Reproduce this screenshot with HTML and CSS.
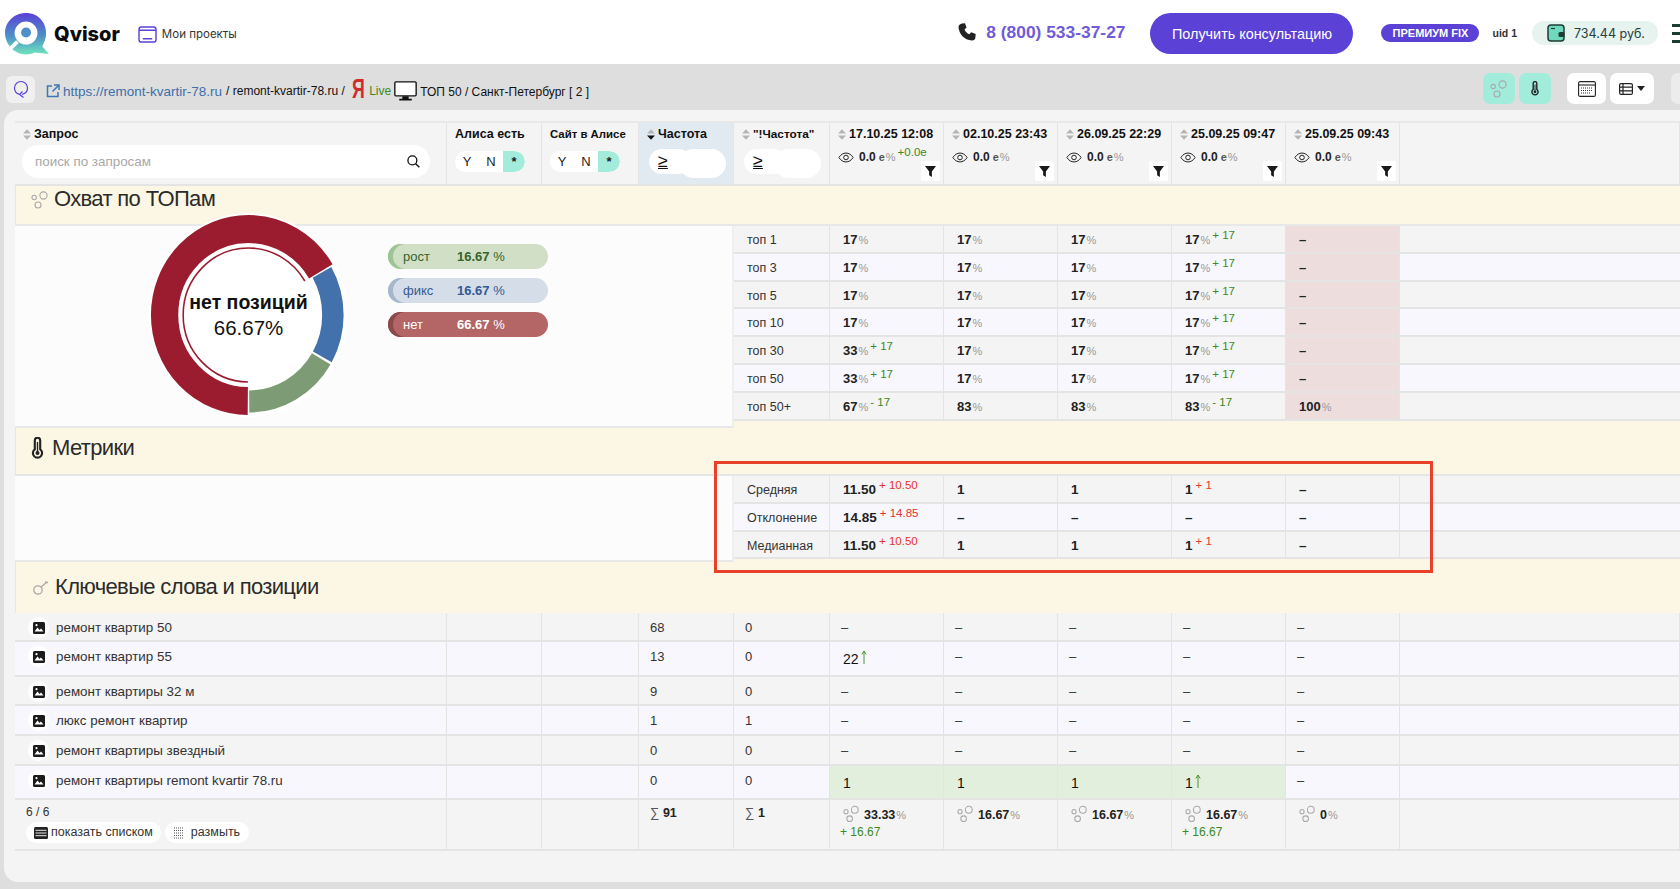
FILE: index.html
```html
<!DOCTYPE html>
<html lang="ru">
<head>
<meta charset="utf-8">
<title>Qvisor</title>
<link rel="stylesheet" href="styles.css">
</head>
<body>
<svg class="defs" width="0" height="0" aria-hidden="true">
  <symbol id="sort" viewBox="0 0 9 12"><path d="M4.500 0 9 5H0zM4.500 12 0 7h9z" fill="#b5b5b5"/></symbol>
  <symbol id="sort-on" viewBox="0 0 9 12"><path d="M4.500 0 9 5H0z" fill="#b5b5b5"/><path d="M4.500 12 0 7h9z" fill="#111"/></symbol>
  <symbol id="bubbles" viewBox="0 0 18 18"><g fill="none" stroke="#a9a9a9" stroke-width="1.100"><circle cx="3.200" cy="6.500" r="2.200"/><circle cx="12.500" cy="4.500" r="3.600"/><circle cx="7" cy="14" r="3"/></g></symbol>
  <symbol id="eye" viewBox="0 0 18 12"><path d="M1 6c2-3.300 5-5 8-5s6 1.700 8 5c-2 3.300-5 5-8 5S3 9.300 1 6z" fill="none" stroke="#222" stroke-width="1.100"/><circle cx="9" cy="6" r="2.600" fill="none" stroke="#222" stroke-width="1.100"/></symbol>
  <symbol id="funnel" viewBox="0 0 12 12"><path d="M0 0h12L7.500 6v6l-3-2V6z" fill="#1a1a1a"/></symbol>
  <symbol id="pic" viewBox="0 0 12 12"><path fill="#1b1b1b" d="M1.500 0h9A1.500 1.500 0 0 1 12 1.500v9a1.500 1.500 0 0 1-1.500 1.500h-9A1.500 1.500 0 0 1 0 10.500v-9A1.500 1.500 0 0 1 1.500 0z"/><path fill="#fff" d="M1.500 9.500 4.500 5.500l2 2.500 1.500-1.500 2.500 3z"/><circle cx="3.500" cy="3.200" r="1.100" fill="#fff"/></symbol>
  <symbol id="thermo" viewBox="0 0 12 22"><path d="M3.300 3.400a2.700 2.700 0 0 1 5.400 0v8.900a4.600 4.600 0 1 1-5.400 0z" fill="none" stroke="#222" stroke-width="2.100"/><circle cx="6" cy="16" r="2" fill="#222"/><path d="M6 5v10" stroke="#222" stroke-width="1.400"/></symbol>
  <symbol id="list" viewBox="0 0 14 12"><rect x=".6" y=".6" width="12.800" height="10.800" rx="1.500" fill="none" stroke="#222" stroke-width="1.200"/><path d="M.6 4.200h12.800M.6 7.800h12.800M4 .6v10.800" stroke="#222" stroke-width="1.200"/></symbol>
  <symbol id="list-solid" viewBox="0 0 14 12"><rect width="14" height="12" rx="1.500" fill="#222"/><path d="M1.500 3.300h11M1.500 6h11M1.500 8.700h11" stroke="#fff" stroke-width=".9"/></symbol>
  <symbol id="arrow" viewBox="0 0 6 14"><path d="M3 14V1.500M.8 4.500 3 1l2.200 3.500" fill="none" stroke="#3a8a23" stroke-width=".9"/></symbol>
</svg>

<header class="topbar">
  <a class="brand">
    <svg class="logo" viewBox="0 0 46 44">
      <defs><linearGradient id="lg" x1="0" y1="0" x2="0" y2="1"><stop offset="0" stop-color="#5b3fd8"/><stop offset=".55" stop-color="#4d90c6"/><stop offset="1" stop-color="#6fe3bd"/></linearGradient></defs>
      <path fill="url(#lg)" d="M22 0C34 0 43 9 43 21c0 6-2 10-4 14l7 8-15-1.500C28 43 25 43.500 22 43.500 10 43.500 0 33 0 21 0 9 10 0 22 0z"/>
      <circle cx="22" cy="21" r="12" fill="#fff"/>
      <circle cx="22" cy="20.500" r="5.200" fill="#4f8fc9"/>
      <path d="M13 30 5 38" stroke="#fff" stroke-width="4"/>
    </svg>
    <span class="brand-name">Qvisor</span>
  </a>
  <a class="projects">
    <svg class="projects-icon" viewBox="0 0 20 18"><rect x="1" y="1" width="18" height="16" rx="2.500" fill="none" stroke="#5b41d6" stroke-width="1.500"/><path d="M1 4.500h18M5 13.500h10" stroke="#5b41d6" stroke-width="1.500"/></svg>
    Мои проекты
  </a>
  <div class="top-right">
    <svg class="phone-icon" viewBox="0 0 18 18"><path fill="#222" d="M4 .5 7 .2l1.500 4.300-2 2c.8 2 2.500 3.800 4.700 4.800l2-2L17.700 11l-.3 3.500C17.200 16.300 16 17.500 14 17.500 6 17 1 11 .5 4 .5 2.300 2 .7 4 .5z"/></svg>
    <span class="phone">8 (800) 533-37-27</span>
    <button class="cta">Получить консультацию</button>
    <span class="plan">ПРЕМИУМ FIX</span>
    <span class="uid">uid 1</span>
    <span class="balance">
      <svg class="wallet" viewBox="0 0 18 18"><rect x="1" y="1" width="16" height="16" rx="3" fill="#6fd9bd" stroke="#1f3b35" stroke-width="1.500"/><rect x="11.500" y="8" width="6" height="5" rx="1.500" fill="#1f3b35"/><path d="M4 4.500h4" stroke="#1f3b35" stroke-width="1.200"/></svg>
      734.44 руб.
    </span>
    <span class="burger"><i></i><i></i><i></i></span>
  </div>
</header>

<nav class="toolbar">
  <span class="refresh">
    <svg viewBox="0 0 16 20" width="16" height="20"><path d="M9 14.500c3-.8 5.500-3 5.500-6.500A6.500 6.500 0 0 0 8 1.500 6.500 6.500 0 0 0 1.500 8c0 3 2 5.500 5 6.300M10.500 17.500 6.500 14.500l3-3" fill="none" stroke="#5b41d6" stroke-width="1.200"/></svg>
  </span>
  <svg class="ext" viewBox="0 0 14 14"><path d="M6 2H1.500v10.500H12V8M8 1h5v5M13 1 6.500 7.500" fill="none" stroke="#3d78b5" stroke-width="1.500"/></svg>
  <a class="url">https://remont-kvartir-78.ru</a>
  <span class="crumb">/ remont-kvartir-78.ru /</span>
  <span class="ya">Я</span>
  <span class="live">Live</span>
  <svg class="monitor" viewBox="0 0 22 19"><rect x=".8" y=".8" width="20.400" height="13.400" rx="1" fill="#fff" stroke="#111" stroke-width="1.300"/><path d="M8 14.500h6v2.500h3v1.500H5V17h3z" fill="#111"/></svg>
  <span class="crumb-region">ТОП 50 / Санкт-Петербург [ 2 ]</span>
  <div class="tools">
    <span class="tool mint"><svg width="18" height="18"><use href="#bubbles"/></svg></span>
    <span class="tool mint"><svg width="8" height="15"><use href="#thermo"/></svg></span>
    <span class="tool white gap">
      <svg viewBox="0 0 18 16" width="18" height="16"><rect x=".6" y=".6" width="16.800" height="14.800" rx="1.500" fill="none" stroke="#222" stroke-width="1.100"/><path d="M.6 4h16.800" stroke="#222" stroke-width="1.100"/><path d="M3 7h12M3 9.500h12M3 12h9" stroke="#333" stroke-width="1.100" stroke-dasharray="1 1"/></svg>
    </span>
    <span class="tool white wide"><svg width="14" height="12"><use href="#list"/></svg><i class="caret"></i></span>
    <span class="tool ghost"></span>
  </div>
</nav>

<main class="panel">
  <div class="sheet">
    <div class="row head">
      <div class="c search-col">
        <div class="h"><svg class="s"><use href="#sort"/></svg>Запрос</div>
        <div class="search"><span>поиск по запросам</span>
          <svg viewBox="0 0 14 14" width="13" height="13"><circle cx="5.800" cy="5.800" r="4.800" fill="none" stroke="#111" stroke-width="1.400"/><path d="M9.300 9.300 13.300 13.300" stroke="#111" stroke-width="1.500"/></svg>
        </div>
      </div>
      <div class="c"><div class="h h-large">Алиса есть</div><div class="yn"><b>Y</b><b>N</b><b class="on">*</b></div></div>
      <div class="c"><div class="h h-small">Сайт в Алисе</div><div class="yn"><b>Y</b><b>N</b><b class="on">*</b></div></div>
      <div class="c active"><div class="h"><svg class="s"><use href="#sort-on"/></svg>Частота</div><div class="gte"><span>≥</span><i></i></div></div>
      <div class="c"><div class="h h-tight"><svg class="s"><use href="#sort"/></svg>"!Частота"</div><div class="gte"><span>≥</span><i></i></div></div>
      <div class="c date"><div class="h"><svg class="s"><use href="#sort"/></svg>17.10.25 12:08</div><div class="vis"><svg class="e"><use href="#eye"/></svg><b>0.0</b><em>е</em><u>%</u><sup class="up">+0.0е</sup></div><span class="fn"><svg width="11" height="11"><use href="#funnel"/></svg></span></div>
      <div class="c date"><div class="h"><svg class="s"><use href="#sort"/></svg>02.10.25 23:43</div><div class="vis"><svg class="e"><use href="#eye"/></svg><b>0.0</b><em>е</em><u>%</u></div><span class="fn"><svg width="11" height="11"><use href="#funnel"/></svg></span></div>
      <div class="c date"><div class="h"><svg class="s"><use href="#sort"/></svg>26.09.25 22:29</div><div class="vis"><svg class="e"><use href="#eye"/></svg><b>0.0</b><em>е</em><u>%</u></div><span class="fn"><svg width="11" height="11"><use href="#funnel"/></svg></span></div>
      <div class="c date"><div class="h"><svg class="s"><use href="#sort"/></svg>25.09.25 09:47</div><div class="vis"><svg class="e"><use href="#eye"/></svg><b>0.0</b><em>е</em><u>%</u></div><span class="fn"><svg width="11" height="11"><use href="#funnel"/></svg></span></div>
      <div class="c date"><div class="h"><svg class="s"><use href="#sort"/></svg>25.09.25 09:43</div><div class="vis"><svg class="e"><use href="#eye"/></svg><b>0.0</b><em>е</em><u>%</u></div><span class="fn"><svg width="11" height="11"><use href="#funnel"/></svg></span></div>
      <div class="c"></div>
    </div>

    <h2 class="band band-tops"><svg width="18" height="18"><use href="#bubbles"/></svg>Охват по ТОПам</h2>

    <section class="split coverage">
      <div class="side chart-side">
        <div class="donut">
          <svg viewBox="0 0 204 204" width="199" height="204" preserveAspectRatio="none">
            <circle cx="102" cy="102" r="102" fill="#fff"/>
            <g fill="none" transform="rotate(-90 102 102)">
              <circle cx="102" cy="102" r="86" pathLength="360" stroke="#9b1c2e" stroke-width="28" stroke-dasharray="239 121" stroke-dashoffset="-180.500"/>
              <circle cx="102" cy="102" r="86.500" pathLength="360" stroke="#4271ab" stroke-width="22" stroke-dasharray="58.500 301.500" stroke-dashoffset="-60.500"/>
              <circle cx="102" cy="102" r="86.500" pathLength="360" stroke="#7d9c75" stroke-width="22" stroke-dasharray="59 301" stroke-dashoffset="-120.500"/>
              <circle cx="102" cy="102" r="67" pathLength="360" stroke="#9b1c2e" stroke-width="1.600" stroke-dasharray="239 121" stroke-dashoffset="-180.500"/>
            </g>
          </svg>
          <div class="donut-label"><b>нет позиций</b><span>66.67%</span></div>
        </div>
        <ul class="legend">
          <li class="grow"><span>рост</span><b>16.67 <small>%</small></b></li>
          <li class="fix"><span>фикс</span><b>16.67 <small>%</small></b></li>
          <li class="none"><span>нет</span><b>66.67 <small>%</small></b></li>
        </ul>
      </div>
      <div class="stats">
        <div class="mrow"><div class="c">топ 1</div><div class="c"><b>17</b><u>%</u></div><div class="c"><b>17</b><u>%</u></div><div class="c"><b>17</b><u>%</u></div><div class="c"><b>17</b><u>%</u><sup class="up">+ 17</sup></div><div class="c off"><b>–</b></div><div class="c"></div></div>
        <div class="mrow"><div class="c">топ 3</div><div class="c"><b>17</b><u>%</u></div><div class="c"><b>17</b><u>%</u></div><div class="c"><b>17</b><u>%</u></div><div class="c"><b>17</b><u>%</u><sup class="up">+ 17</sup></div><div class="c off"><b>–</b></div><div class="c"></div></div>
        <div class="mrow"><div class="c">топ 5</div><div class="c"><b>17</b><u>%</u></div><div class="c"><b>17</b><u>%</u></div><div class="c"><b>17</b><u>%</u></div><div class="c"><b>17</b><u>%</u><sup class="up">+ 17</sup></div><div class="c off"><b>–</b></div><div class="c"></div></div>
        <div class="mrow"><div class="c">топ 10</div><div class="c"><b>17</b><u>%</u></div><div class="c"><b>17</b><u>%</u></div><div class="c"><b>17</b><u>%</u></div><div class="c"><b>17</b><u>%</u><sup class="up">+ 17</sup></div><div class="c off"><b>–</b></div><div class="c"></div></div>
        <div class="mrow"><div class="c">топ 30</div><div class="c"><b>33</b><u>%</u><sup class="up">+ 17</sup></div><div class="c"><b>17</b><u>%</u></div><div class="c"><b>17</b><u>%</u></div><div class="c"><b>17</b><u>%</u><sup class="up">+ 17</sup></div><div class="c off"><b>–</b></div><div class="c"></div></div>
        <div class="mrow"><div class="c">топ 50</div><div class="c"><b>33</b><u>%</u><sup class="up">+ 17</sup></div><div class="c"><b>17</b><u>%</u></div><div class="c"><b>17</b><u>%</u></div><div class="c"><b>17</b><u>%</u><sup class="up">+ 17</sup></div><div class="c off"><b>–</b></div><div class="c"></div></div>
        <div class="mrow"><div class="c">топ 50+</div><div class="c"><b>67</b><u>%</u><sup class="up">- 17</sup></div><div class="c"><b>83</b><u>%</u></div><div class="c"><b>83</b><u>%</u></div><div class="c"><b>83</b><u>%</u><sup class="up">- 17</sup></div><div class="c off"><b>100</b><u>%</u></div><div class="c"></div></div>
      </div>
    </section>

    <h2 class="band band-metrics"><svg width="13" height="22"><use href="#thermo"/></svg>Метрики</h2>

    <section class="split metrics">
      <div class="side"></div>
      <div class="stats">
        <div class="mrow"><div class="c">Средняя</div><div class="c"><b>11.50</b><sup class="down">+ 10.50</sup></div><div class="c"><b>1</b></div><div class="c"><b>1</b></div><div class="c"><b>1</b><sup class="down">+ 1</sup></div><div class="c"><b>–</b></div><div class="c"></div></div>
        <div class="mrow"><div class="c">Отклонение</div><div class="c"><b>14.85</b><sup class="down">+ 14.85</sup></div><div class="c"><b>–</b></div><div class="c"><b>–</b></div><div class="c"><b>–</b></div><div class="c"><b>–</b></div><div class="c"></div></div>
        <div class="mrow"><div class="c">Медианная</div><div class="c"><b>11.50</b><sup class="down">+ 10.50</sup></div><div class="c"><b>1</b></div><div class="c"><b>1</b></div><div class="c"><b>1</b><sup class="down">+ 1</sup></div><div class="c"><b>–</b></div><div class="c"></div></div>
      </div>
    </section>

    <h2 class="band band-keys">
      <svg width="16" height="14" viewBox="0 0 16 14"><g fill="none" stroke="#a9a9a9" stroke-width="1.300"><circle cx="5" cy="9" r="4.200"/><path d="M8 6 14 1M12 1l3 .5"/></g></svg>Ключевые слова и позиции
    </h2>

    <div class="row kw h29"><div class="c q"><span class="pic"><svg width="12" height="12"><use href="#pic"/></svg></span>ремонт квартир 50</div><div class="c"></div><div class="c"></div><div class="c">68</div><div class="c">0</div><div class="c">–</div><div class="c">–</div><div class="c">–</div><div class="c">–</div><div class="c">–</div><div class="c"></div></div>
    <div class="row kw alt h35"><div class="c q"><span class="pic"><svg width="12" height="12"><use href="#pic"/></svg></span>ремонт квартир 55</div><div class="c"></div><div class="c"></div><div class="c">13</div><div class="c">0</div><div class="c pos">22<svg class="arrow"><use href="#arrow"/></svg></div><div class="c">–</div><div class="c">–</div><div class="c">–</div><div class="c">–</div><div class="c"></div></div>
    <div class="row kw h29"><div class="c q"><span class="pic"><svg width="12" height="12"><use href="#pic"/></svg></span>ремонт квартиры 32 м</div><div class="c"></div><div class="c"></div><div class="c">9</div><div class="c">0</div><div class="c">–</div><div class="c">–</div><div class="c">–</div><div class="c">–</div><div class="c">–</div><div class="c"></div></div>
    <div class="row kw alt h30"><div class="c q"><span class="pic"><svg width="12" height="12"><use href="#pic"/></svg></span>люкс ремонт квартир</div><div class="c"></div><div class="c"></div><div class="c">1</div><div class="c">1</div><div class="c">–</div><div class="c">–</div><div class="c">–</div><div class="c">–</div><div class="c">–</div><div class="c"></div></div>
    <div class="row kw h30"><div class="c q"><span class="pic"><svg width="12" height="12"><use href="#pic"/></svg></span>ремонт квартиры звездный</div><div class="c"></div><div class="c"></div><div class="c">0</div><div class="c">0</div><div class="c">–</div><div class="c">–</div><div class="c">–</div><div class="c">–</div><div class="c">–</div><div class="c"></div></div>
    <div class="row kw alt h34"><div class="c q"><span class="pic"><svg width="12" height="12"><use href="#pic"/></svg></span>ремонт квартиры remont kvartir 78.ru</div><div class="c"></div><div class="c"></div><div class="c">0</div><div class="c">0</div><div class="c pos hit">1</div><div class="c pos hit">1</div><div class="c pos hit">1</div><div class="c pos hit">1<svg class="arrow"><use href="#arrow"/></svg></div><div class="c">–</div><div class="c"></div></div>

    <div class="row foot">
      <div class="c">
        <div class="count">6 / 6</div>
        <div class="foot-btns">
          <span class="pill"><svg width="14" height="12"><use href="#list-solid"/></svg>показать списком</span>
          <span class="pill blur"><svg viewBox="0 0 12 12" width="12" height="12"><path d="M1 1h10M1 3.500h10M1 6h10M1 8.500h10M1 11h10" stroke="#555" stroke-width="1.100" stroke-dasharray="1 1"/></svg>размыть</span>
        </div>
      </div>
      <div class="c"></div><div class="c"></div>
      <div class="c"><span class="sum">∑</span> <b>91</b></div>
      <div class="c"><span class="sum">∑</span> <b>1</b></div>
      <div class="c total"><svg width="18" height="18"><use href="#bubbles"/></svg><b>33.33</b><u>%</u><div class="gain">+ 16.67</div></div>
      <div class="c total"><svg width="18" height="18"><use href="#bubbles"/></svg><b>16.67</b><u>%</u></div>
      <div class="c total"><svg width="18" height="18"><use href="#bubbles"/></svg><b>16.67</b><u>%</u></div>
      <div class="c total"><svg width="18" height="18"><use href="#bubbles"/></svg><b>16.67</b><u>%</u><div class="gain">+ 16.67</div></div>
      <div class="c total"><svg width="18" height="18"><use href="#bubbles"/></svg><b>0</b><u>%</u></div>
      <div class="c"></div>
    </div>

    <div class="callout"></div>
  </div>
</main>
</body>
</html>
```

FILE: styles.css
```css
* { box-sizing: border-box; }
html, body { margin: 0; height: 100%; overflow: hidden; }
body { background: #dedede; font: 13px/15px "Liberation Sans", Arial, sans-serif; color: #222; }
.defs { position: absolute; }
svg { display: block; flex: none; }

/* top bar */
.topbar { height: 64px; background: #fff; display: flex; align-items: center; padding-left: 5px; }
.brand { display: flex; align-items: center; margin-top: 4px; }
.logo { width: 44px; height: 42px; }
.brand-name { font: 800 20px/22px Inter, sans-serif; color: #0b0b0b; margin-left: 5px; }
.projects { display: flex; align-items: center; margin: 4px 0 0 18px; font: 11.500px/15px Inter, sans-serif; color: #333; gap: 5px; }
.projects-icon { width: 19px; height: 17px; }
.top-right { margin-left: auto; display: flex; align-items: center; }
.phone-icon { width: 18px; height: 18px; margin-right: 10px; }
.phone { font-weight: 700; font-size: 17.400px; color: #705bd8; }
.cta { margin: 3px 0 0 25px; width: 203px; height: 41px; border: 0; border-radius: 21px; background: #5b41d6; color: #fff; font: 14.400px "Liberation Sans", Arial, sans-serif; }
.plan { margin: 2px 0 0 28px; width: 98px; height: 18px; border-radius: 9px; background: #5b41d6; color: #fff; font-size: 11px; line-height: 18px; font-weight: 700; text-align: center; }
.uid { margin: 2px 0 0 13px; font-size: 10.500px; font-weight: 700; color: #333; }
.balance { margin: 2px 0 0 15px; width: 126px; height: 24px; border-radius: 12px; background: #e6f3ef; display: flex; align-items: center; gap: 9px; padding-left: 15px; font: 12.500px Inter, sans-serif; color: #26403a; white-space: nowrap; }
.wallet { width: 18px; height: 18px; }
.burger { margin: 2px 0 0 14px; width: 8px; display: flex; flex-direction: column; gap: 5px; }
.burger i { display: block; height: 3px; background: #1d3d33; width: 8px; }

/* toolbar */
.toolbar { height: 46px; padding: 9px 0 0 6px; display: flex; align-items: flex-start; }
.refresh { width: 29px; height: 27px; margin-top: 3px; border-radius: 6px; background: #f0f0f0; display: flex; align-items: center; justify-content: center; }
.ext { width: 14px; height: 14px; margin: 11px 0 0 11px; }
.url { margin: 11px 0 0 3px; color: #3d6fa8; font-size: 13.500px; }
.crumb { margin: 11px 0 0 4px; font-size: 12px; color: #111; }
.ya { margin: 3px -6px 0 7px; font: 700 27px/27px "Liberation Sans", sans-serif; color: #d02c2c; transform: scaleX(.66); transform-origin: left; }
.live { margin: 11px 0 0 4px; color: #3a8a23; font-size: 12px; }
.monitor { width: 23px; height: 20px; margin: 8px 0 0 3px; }
.crumb-region { margin: 12px 0 0 3px; font-size: 12px; color: #111; }
.tools { margin-left: auto; display: flex; gap: 4px; }
.tool { height: 31px; width: 32px; border-radius: 7px; display: flex; align-items: center; justify-content: center; }
.mint { background: #a2ecdb; }
.white { background: #fff; width: 39px; }
.gap { margin-left: 12px; }
.wide { width: 44px; gap: 4px; }
.ghost { background: #ececec; width: 9px; margin-left: 13px; border-radius: 7px 0 0 7px; }
.caret { border: 4px solid transparent; border-top: 5px solid #222; border-bottom: 0; }

/* panel */
.panel { margin-left: 4px; height: 772px; background: #f4f4f4; border-radius: 14px 0 0 14px; padding: 11px 0 0 11px; overflow: hidden; }
.sheet { position: relative; }
.row { display: grid; grid-template-columns: 432px 95px 97px 95px 96px repeat(5, 114px) 1fr; border-bottom: 2px solid #e4e4e4; }
.c { border-right: 1px solid #e4e4e4; padding: 0 11px; min-width: 0; }

/* table head */
.head { height: 65px; border-top: 2px solid #e8e8e8; background: #f4f4f4; }
.head .c { position: relative; padding: 3px 0 0 8px; }
.h { display: flex; align-items: center; gap: 3px; font-weight: 700; font-size: 12.500px; color: #111; height: 16px; white-space: nowrap; }
.h-large { font-size: 12.500px; }
.h-small { font-size: 11.400px; }
.h-tight { font-size: 11.800px; }
.s { width: 8px; height: 11px; }
.active { background: #e1e9f1; }
.search { margin: 3px 0 0 -1px; width: 408px; height: 33px; background: #fff; border-radius: 17px; display: flex; align-items: center; justify-content: space-between; padding: 0 10px 0 13px; color: #a8a8a8; font-size: 13.400px; }
.yn { margin: 9px 0 0 0; width: 70px; height: 21px; background: #fff; border-radius: 11px; display: grid; grid-template-columns: 24px 24px 22px; overflow: hidden; }
.yn b { font-weight: 400; font-size: 13px; line-height: 21px; text-align: center; }
.yn .on { background: #a3ecdb; font-weight: 700; border-radius: 0 11px 11px 0; }
.gte { margin: 7px 0 0 2px; width: 77px; height: 29px; position: relative; }
.gte span { display: block; width: 42px; height: 25px; margin-top: 2px; background: #fff; border-radius: 13px; font-size: 18px; line-height: 25px; padding-left: 9px; color: #111; text-decoration: underline; text-underline-offset: 1px; }
.gte i { position: absolute; right: 0; top: 0; width: 47px; height: 29px; background: #fff; border-radius: 15px; }
.vis { display: flex; align-items: baseline; margin-top: 8px; font-size: 12px; color: #222; position: relative; }
.e { width: 16px; height: 11px; margin-right: 5px; align-self: center; }
.vis em { font-style: normal; font-size: 11px; color: #555; font-weight: 700; margin-left: 3px; }
.vis b { font-weight: 700; }
u { text-decoration: none; color: #999; font-size: 11px; margin-left: 1px; }
.up, .down { font-size: 11.500px; line-height: 1; position: relative; top: -5px; vertical-align: baseline; }
.up { color: #3a8a23; margin-left: 2px; }
.down { color: #e8332a; margin-left: 3px; }

.fn { position: absolute; right: 3px; bottom: 3px; width: 19px; height: 20px; background: #fff; border-radius: 2px; display: flex; align-items: center; justify-content: center; }

/* bands */
.band { margin: 0; background: #fbf7e4; font: 400 22px/26px "Liberation Sans", Arial, sans-serif; letter-spacing: -.65px; color: #2b2b2b; display: flex; gap: 5px; padding-left: 15px; border-left: 1px solid #e6e6e6; }
.band-tops { height: 40px; border-bottom: 2px solid #e8e8e8; }
.band-tops svg { margin-top: 5px; }
.band-metrics { height: 48px; padding: 7px 0 0 15px; border-bottom: 2px solid #e6e6e6; gap: 8px; }
.band-metrics svg { margin-top: 2px; }
.band-keys { height: 51px; padding: 12px 0 0 17px; gap: 6px; }
.band-keys svg { margin-top: 7px; }

/* split sections */
.split { display: grid; grid-template-columns: 719px 1fr; background: #fbf7e4; }
.coverage { height: 202px; }
.metrics { height: 86px; }
.side { background: #fcfcfc; border-right: 2px solid #efefef; border-bottom: 2px solid #e8e8e8; }
.chart-side { position: relative; display: flex; }
.donut { position: relative; width: 199px; height: 204px; margin: -13px 0 0 134px; z-index: 1; flex: none; }
.donut-label { position: absolute; inset: 0; display: flex; flex-direction: column; align-items: center; justify-content: center; color: #111; }
.donut-label b { font-size: 19.500px; line-height: 24px; }
.donut-label span { font-size: 20.500px; line-height: 27px; }
.legend { list-style: none; margin: 18px 0 0 40px; padding: 0; display: flex; flex-direction: column; gap: 9px; }
.legend li { width: 160px; height: 25px; border-radius: 13px; display: flex; align-items: center; font-size: 13px; padding-left: 15px; }
.legend span { width: 54px; }
.legend small { font-size: 13px; font-weight: 400; }
.grow { background: #d0dfc6; color: #37642b; box-shadow: inset 5px 0 0 #9cc494; }
.fix { background: #d5dde8; color: #345a92; box-shadow: inset 5px 0 0 #a6b6cc; }
.none { background: #b46666; color: #fff; box-shadow: inset 5px 0 0 #8a4a4a; }
.mrow { display: grid; grid-template-columns: 96px repeat(5, 114px) 1fr; height: 27.800px; border-bottom: 2px solid #e4e4e4; background: #f4f4f4; align-items: stretch; }
.mrow:nth-child(even) { background: #f8f7fe; }
.mrow .c { padding: 6px 13px 0; white-space: nowrap; }
.mrow .c:first-child { color: #333; font-size: 12.500px; padding-top: 7px; }
.mrow b { font-size: 13px; line-height: 16px; color: #222; }
.metrics .mrow b { font-size: 13.500px; }
.off { background: #eddddd; }
.mrow .c:nth-last-child(1) { border-right: 0; }

/* keywords */
.kw { background: #f4f4f4; font-size: 13px; color: #333; }
.alt { background: #f8f7fe; }
.kw .c { padding-top: 7px; }
.kw .q { padding: 4px 0 0 13px; display: flex; align-items: flex-start; font-size: 13.400px; }
.pic { width: 21px; height: 21px; background: #fff; border-radius: 50%; display: flex; align-items: center; justify-content: center; margin-right: 7px; flex: none; }
.q { line-height: 21px; }
.h29 { height: 29px; }
.h30 { height: 30px; }
.h34 { height: 34px; }
.h35 { height: 35px; }
.kw .pos { font-size: 14px; color: #111; padding: 10px 13px 0; display: flex; align-items: flex-start; }
.hit { background: #e2efdc; }
.arrow { width: 6px; height: 14px; margin: -2px 0 0 2px; }
.foot { height: 51px; background: #f4f4f4; }
.foot .c { padding-top: 5px; }
.foot .c:first-child { padding-left: 11px; }
.count { font-size: 12px; color: #333; }
.foot-btns { display: flex; gap: 4px; margin-top: 2px; }
.pill { height: 21px; padding: 0 8px; border-radius: 11px; background: #fff; display: flex; align-items: center; gap: 3px; font-size: 12.500px; color: #333; }
.blur { gap: 6px; padding-right: 9px; }
.sum { color: #555; font-size: 13px; }
.foot b { color: #222; font-size: 12.500px; }
.foot .total { padding-left: 13px; position: relative; }
.total svg { display: inline-block; vertical-align: -4px; margin-right: 4px; width: 17px; }
.total u { color: #999; }
.gain { color: #3a8a23; font-size: 12px; margin: 2px 0 0 -3px; }

/* red annotation frame */
.callout { position: absolute; left: 699px; top: 340px; width: 719px; height: 112px; border: 3px solid #e8412a; pointer-events: none; }
```
